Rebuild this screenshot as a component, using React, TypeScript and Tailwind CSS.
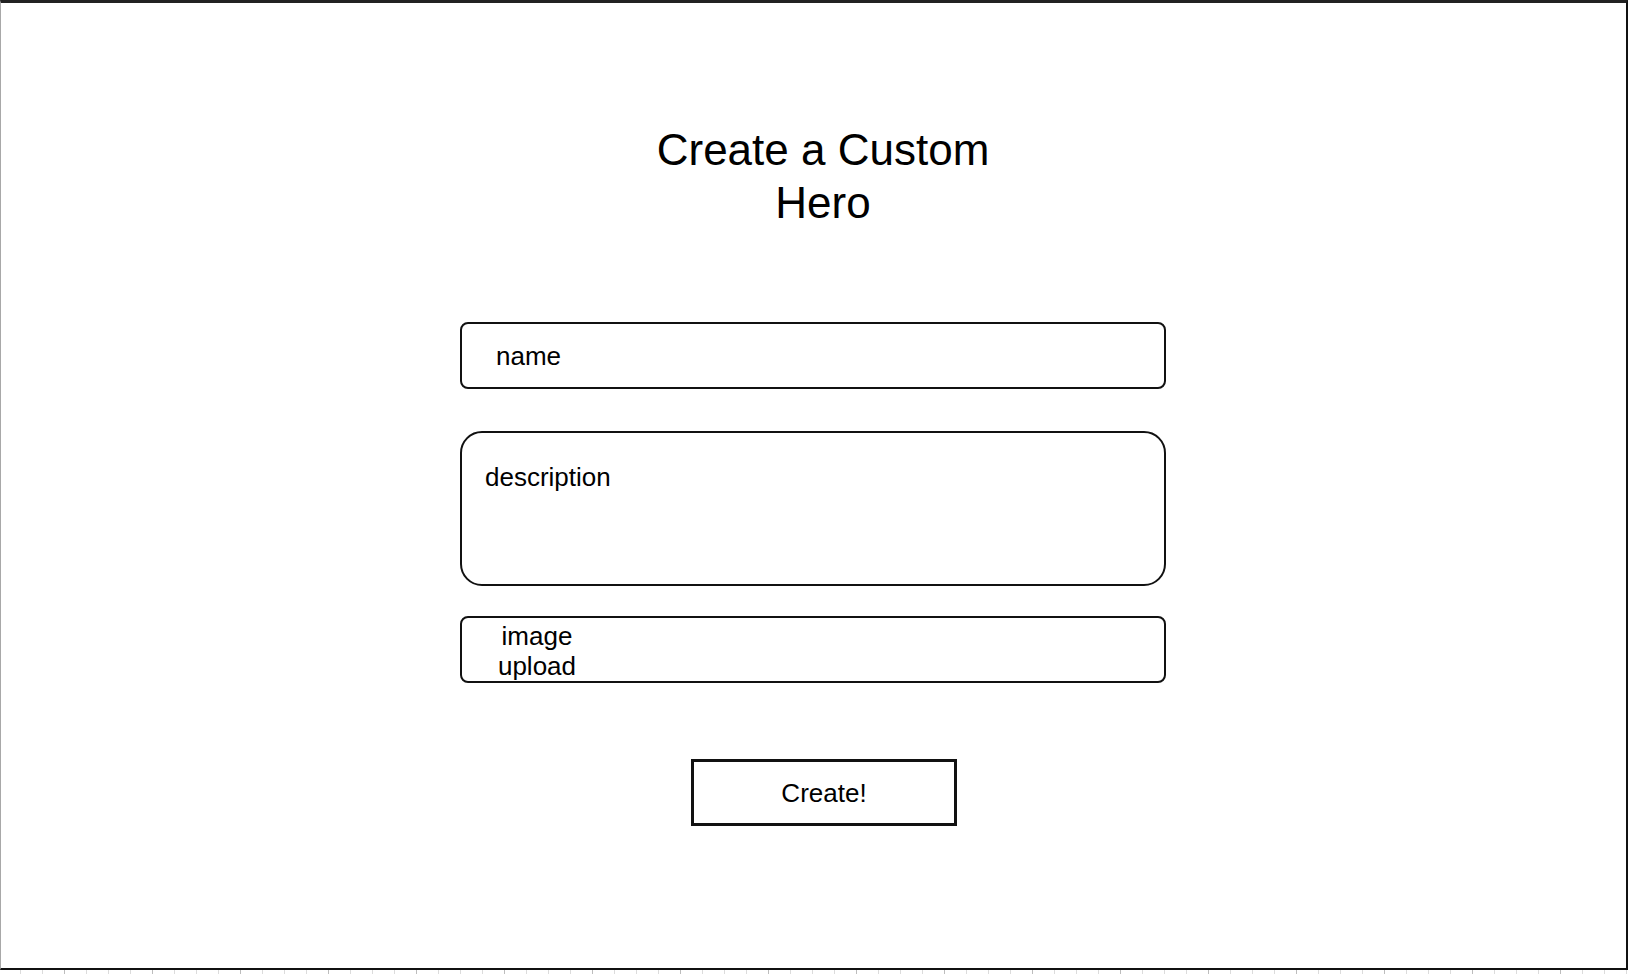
import React from "react";

// ruler ticks under the frame: minor every 22px, major every 88px
function Ruler() {
  const ticks: { x: number; major: boolean }[] = [];
  for (let k = 1; k * 22 - 2 < 1628; k++) {
    const x = k * 22 - 2;
    ticks.push({ x, major: (x - 64) % 88 === 0 });
  }
  return (
    <svg width="1628" height="4" className="block">
      {ticks.map((t) => (
        <line
          key={t.x}
          x1={t.x + 0.5}
          x2={t.x + 0.5}
          y1={0}
          y2={4}
          stroke={t.major ? "#bdbdbd" : "#dcdcdc"}
          strokeWidth={1}
        />
      ))}
    </svg>
  );
}

export default function App() {
  return (
    <div className="h-[974px] w-[1628px] overflow-hidden bg-white text-black" style={{ fontFamily: '"Liberation Sans", Arial, sans-serif' }}>
      <div className="h-[970px] border-t-[3px] border-r-2 border-b-2 border-l border-t-[#222] border-r-[#111] border-b-[#111] border-l-[#a8a8a8]">
        <div className="ml-[459px] flex w-[706px] flex-col pt-[120px]">
          <h1 className="pl-[20px] text-center text-[44px] leading-[53px] font-normal">
            Create a Custom
            <br />
            Hero
          </h1>

          <div className="mt-[93px] flex h-[67px] items-center rounded-[8px] border-2 border-[#111] pl-[34px] text-[26px] leading-[30px]">
            name
          </div>

          <div className="mt-[42px] h-[155px] rounded-[22px] border-2 border-[#111] pt-[29px] pl-[23px] text-[26px] leading-[30px]">
            description
          </div>

          <div className="mt-[30px] h-[67px] overflow-hidden rounded-[8px] border-2 border-[#111] pt-[3px] pl-[35px] text-[26px] leading-[30px]">
            <div className="w-[80px] text-center">image upload</div>
          </div>

          <button
            type="button"
            className="mt-[76px] ml-[231px] flex h-[67px] w-[266px] items-center justify-center border-[3px] border-[#111] text-[26px] leading-[30px]"
          >
            Create!
          </button>
        </div>
      </div>
      <Ruler />
    </div>
  );
}
